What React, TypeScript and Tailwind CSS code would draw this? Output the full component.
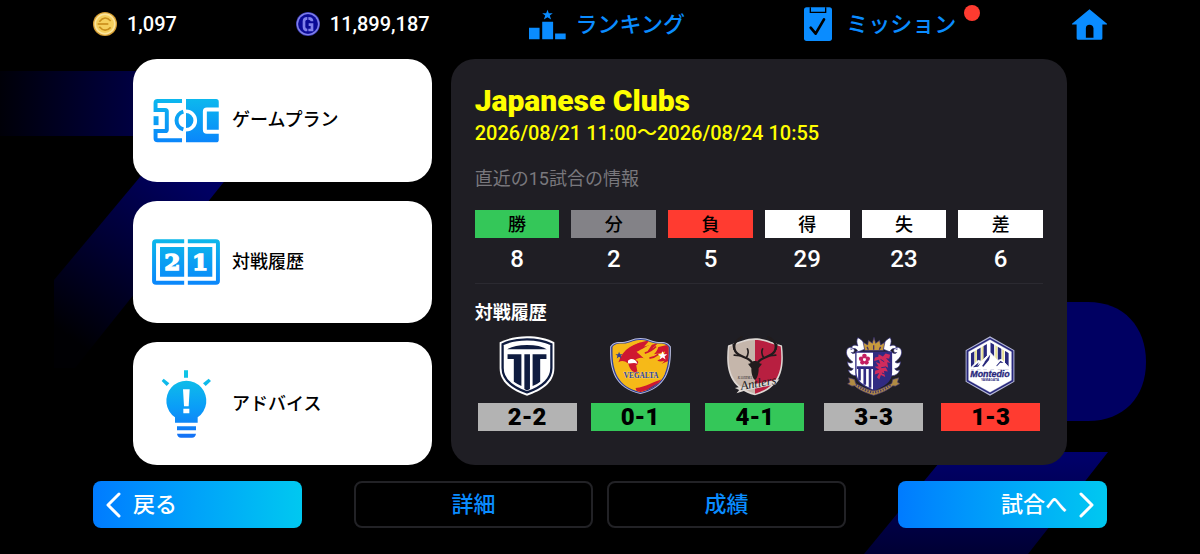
import React from "react";
import clsx from "clsx";

interface Stat {
  label: string;
  value: number;
  color: string;
}

interface Match {
  club: string;
  score: string;
  color: string;
  Crest: React.FC;
}

interface MenuItem {
  label: string;
  Icon: React.FC;
}

const CoinIcon = () => (
  <svg className="size-6 shrink-0" viewBox="0 0 72 72" aria-hidden="true">
    <circle cx="36" cy="36" r="36" fill="#d9a033" />
    <circle cx="36" cy="36" r="32" fill="#fbe49a" />
    <circle cx="36" cy="36" r="27" fill="#f5cf5c" />
    <g fill="none" stroke="#c98f1c" strokeWidth="5">
      <path d="M19 29 Q36 8 53 27" />
      <path d="M14 36 H46" />
      <path d="M19 44 Q36 64 53 46" />
    </g>
  </svg>
);

const GpIcon = () => (
  <svg className="size-6 shrink-0" viewBox="0 0 72 72" aria-hidden="true">
    <circle cx="36" cy="36" r="36" fill="#3a3ab0" />
    <circle cx="36" cy="36" r="32" fill="none" stroke="#8080ea" strokeWidth="4" />
    <circle cx="36" cy="36" r="29" fill="#0a0a96" />
    <g fill="none" stroke="#8080ea" strokeWidth="8">
      <path d="M34 19 Q24 19 24 28 V44 Q24 54 34 54" />
      <path d="M37 19 Q48 19 48 28" />
      <path d="M38 38 H48 V54 H37" />
    </g>
  </svg>
);

const RankingIcon = () => (
  <svg
    className="h-[31px] w-[37px] shrink-0"
    viewBox="57 24 112 92"
    fill="currentColor"
    aria-hidden="true"
  >
    <path d="M57 80h32v35H57zM97 62h33v53H97zM136 97h32v18h-32z" />
    <path d="M113 25l4 11h12l-9 7 4 12-11-7-11 7 4-12-9-7h12z" />
  </svg>
);

const MissionIcon = () => (
  <svg className="h-[34px] w-7 shrink-0" viewBox="75 21 84 102" aria-hidden="true">
    <rect x="75" y="22" width="84" height="101" rx="8" fill="currentColor" />
    <path d="M94 22v15h46V22" fill="none" stroke="#000" strokeWidth="4" />
    <path
      d="M95 83l15 18 25-43"
      fill="none"
      stroke="#000"
      strokeWidth="8"
      strokeLinecap="round"
      strokeLinejoin="round"
    />
  </svg>
);

const HomeIcon = () => (
  <svg
    className="h-[31px] w-[35px]"
    viewBox="874 26 106 92"
    fill="currentColor"
    aria-hidden="true"
  >
    <path d="M927 26l53 44v2h-14v42q0 4-4 4h-70q-4 0-4-4V72h-14v-2z" />
    <path d="M916 112V84q0-11 11-11t12 11v28z" fill="#000" />
  </svg>
);

const GamePlanIcon = () => (
  <svg className="h-[45px] w-[68px] shrink-0" viewBox="66 128 204 136" aria-hidden="true">
    <defs>
      <linearGradient
        id="plan"
        x1="0"
        y1="131"
        x2="0"
        y2="262"
        gradientUnits="userSpaceOnUse"
      >
        <stop stopColor="#0cb8ee" />
        <stop offset="1" stopColor="#0a86fb" />
      </linearGradient>
    </defs>
    <g fill="none" stroke="url(#plan)" strokeWidth="12">
      <path d="M156 137H82q-6 0-6 6v21h29q5 0 5 5v54q0 5-5 5H76v22q0 6 6 6h74" />
      <path d="M160 169a28 28 0 0 0 0 54" strokeWidth="12" />
    </g>
    <path d="M70 183h15v27H70z" fill="url(#plan)" />
    <path d="M168 131h91q8 0 8 8v115q0 8-8 8h-91z" fill="url(#plan)" />
    <path d="M168 168a28 28 0 0 1 0 56" fill="none" stroke="#fff" strokeWidth="11" />
    <path
      d="M270 163h-39q-6 0-6 6v55q0 6 6 6h39"
      fill="none"
      stroke="#fff"
      strokeWidth="12"
    />
  </svg>
);

const HistoryIcon = () => (
  <svg className="h-[46px] w-[68px] shrink-0" viewBox="66 551 205 139" aria-hidden="true">
    <defs>
      <linearGradient
        id="history"
        x1="0"
        y1="552"
        x2="0"
        y2="689"
        gradientUnits="userSpaceOnUse"
      >
        <stop stopColor="#0cb8ea" />
        <stop offset="1" stopColor="#0a86fb" />
      </linearGradient>
    </defs>
    <g fill="none" stroke="url(#history)" strokeWidth="12">
      <path d="M163 558H78q-6 0-6 6v113q0 6 6 6h85" />
      <path d="M174 558h85q6 0 6 6v113q0 6-6 6h-85" />
    </g>
    <path d="M90 575h73v90H90zM174 575h74v90h-74z" fill="url(#history)" />
    <g
      fill="#fff"
      stroke="#fff"
      strokeWidth="4"
      fontFamily="'DejaVu Serif', serif"
      fontWeight="700"
      fontSize="70"
      textAnchor="middle"
    >
      <text x="127" y="646">
        2
      </text>
      <text x="211" y="646">
        1
      </text>
    </g>
  </svg>
);

const AdviceIcon = () => (
  <svg className="h-[70px] w-[68px] shrink-0" viewBox="66 117 204 208" aria-hidden="true">
    <defs>
      <linearGradient
        id="advice"
        x1="0"
        y1="120"
        x2="0"
        y2="322"
        gradientUnits="userSpaceOnUse"
      >
        <stop stopColor="#10c8e4" />
        <stop offset="0.55" stopColor="#0a9df8" />
        <stop offset="1" stopColor="#1470f5" />
      </linearGradient>
    </defs>
    <g fill="url(#advice)">
      <path d="M162 120h12v22h-12zM101 145l17 14-8 8-15-15zM236 145l-17 14 8 8 16-15z" />
      <path d="M135 277v-16a60 60 0 1 1 68 0v16z" />
      <path d="M141 288h57v12h-57zM141 310h57q-2 12-12 12h-33q-10 0-12-12z" />
    </g>
    <path d="M159 177h20l-3 51h-14zM160 235h18v14h-18z" fill="#fff" />
  </svg>
);

const TochigiCrest = () => (
  <svg className="h-[60px] w-[56px]" viewBox="117 32 168 182" aria-hidden="true">
    <path
      d="M201 33c30 0 60 6 83 18v78c0 46-40 69-83 84-43-15-83-38-83-84V51c23-12 53-18 83-18z"
      fill="#fff"
    />
    <path
      d="M201 42c27 0 53 5 74 15v72c0 40-34 60-74 74-40-14-74-34-74-74V57c21-10 47-15 74-15z"
      fill="none"
      stroke="#0f1c40"
      strokeWidth="7"
    />
    <g fill="#0f1c40">
      <path d="M141 72q20-13 60-13t60 13z" />
      <path d="M142 87h42v97q-13-6-23-13v-69h-19z" />
      <path d="M193 87h17v106l-9 4-8-4z" />
      <path d="M218 87h42v15h-19v69q-9 8-23 13z" />
    </g>
  </svg>
);

const VegaltaCrest = () => (
  <svg className="h-[60px] w-[63px]" viewBox="449 32 188 182" aria-hidden="true">
    <defs>
      <clipPath id="vegaltaShield">
        <path d="M543 44c23 0 34 11 51 11 14 0 24-1 34 10 2 66-11 121-85 137-74-16-87-71-85-137 10-11 20-10 34-10 17 0 28-11 51-11z" />
      </clipPath>
    </defs>
    <path
      d="M543 38c24 0 38 12 54 12 16 0 28-1 38 14 3 73-14 127-92 144-78-17-95-71-92-144 10-15 22-14 38-14 16 0 30-12 54-12z"
      fill="#b9bde0"
    />
    <path
      d="M543 41c23 0 36 12 53 12 15 0 26-1 36 12 2 69-13 123-89 140-76-17-91-71-89-140 10-13 21-12 36-12 17 0 30-12 53-12z"
      fill="#2f3f97"
    />
    <g clipPath="url(#vegaltaShield)">
      <path d="M455 40h180v170H455z" fill="#f6b918" />
      <path
        d="M476 112c14-42 45-58 95-67l-17 19 42-10-17 16 50-12 3 48-49 20c-18-30-42-34-57-20 12-1 13 9 4 15l5 26c-14-2-26-14-29-32-12-8-20-10-30-3z"
        fill="#cf1830"
      />
      <path d="M505 107c10-10 24-4 29 9-11-5-19 0-29-1z" fill="#fff" />
      <path
        d="M531 80c15-6 35-20 49-25l-16 24q18-4 34-19-2 16-14 27 18-2 34-8-8 20-24 28 10 4 22 0-12 18-34 22-18-20-51-49z"
        fill="#f6b918"
      />
      <path
        d="M505 76q16-14 38-22M556 84q20-5 34-20M570 99q16-2 28-12"
        stroke="#cf1830"
        strokeWidth="5"
        fill="none"
      />
      <path d="M488 171c30 18 57 2 92-9l45-20-16 36-66 30z" fill="#f6b918" />
      <path d="M528 190c34-3 46-19 91-29l-25 34-60 13z" fill="#cf1830" />
      <path d="M562 200c14-10 23-19 52-27" stroke="#2f3f97" strokeWidth="7" fill="none" />
    </g>
    <path d="M478 80l3 7h8l-6 5 2 8-7-5-7 5 2-8-6-5h8z" fill="#2f3f97" />
    <path d="M610 78l4 9h10l-8 7 3 9-9-6-9 6 3-9-8-7h10z" fill="#fff" />
    <text
      x="545"
      y="160"
      textAnchor="middle"
      fontFamily="'Liberation Serif', serif"
      fontWeight="700"
      fontSize="22"
      fill="#2f3f97"
      stroke="#f6dc8a"
      strokeWidth="2"
      paintOrder="stroke"
    >
      VEGALTA
    </text>
  </svg>
);

const AntlersCrest = () => (
  <svg className="h-[60px] w-[58px]" viewBox="111 32 174 182" aria-hidden="true">
    <path
      d="M198 39c26 0 45 10 82 22 7 60 4 127-82 151-86-24-89-91-82-151 37-12 56-22 82-22z"
      fill="#ddd7d3"
    />
    <path d="M198 44c-26 0-45 10-78 20-6 58-1 120 78 143z" fill="#c5b6ab" />
    <path d="M198 44c26 0 45 10 78 20 6 58 1 120-78 143z" fill="#b81f40" />
    <g fill="none" stroke="#211c1d" strokeLinecap="round" strokeLinejoin="round">
      <path
        d="M190 116c-5-21-40-17-52-38-7-17-3-30 20-43M206 116c5-21 40-17 52-38 7-17 3-30-20-43"
        strokeWidth="7"
      />
      <path
        d="M134 72l-2-14M152 92l-17-2M171 99c8-11 7-23 4-28M262 72l2-14M244 92l17-2M225 99c-8-11-7-23-4-28"
        strokeWidth="5"
      />
    </g>
    <path
      d="M198 108c12 0 11 10 21 8-4 7-7 9-10 14 1 16-6 35-11 35s-12-19-11-35c-3-5-6-7-10-14 10 2 9-8 21-8z"
      fill="#211c1d"
    />
    <path d="M137 190l26-6 109-21-12 16-96 20-22 7 8-10z" fill="#ddd7d3" />
    <g fill="#211c1d" fontFamily="'Liberation Serif', serif" fontStyle="italic">
      <text x="146" y="163" fontSize="10">
        KASHIMA
      </text>
      <text x="156" y="196" fontSize="38" transform="rotate(-10 156 196)">
        Antlers
      </text>
    </g>
  </svg>
);

const CerezoCrest = () => (
  <svg className="h-[60px] w-[58px]" viewBox="467 33 174 182" aria-hidden="true">
    <g fill="#fff" stroke="#343084" strokeWidth="2">
      <path d="M505 38c15 6 23 21 21 35l-23 9v72c-15 0-23-7-27-18 7 3 13 1 15-4-12-2-17-11-17-21 5 5 12 5 16 1-13-10-22-21-19-34 2-12 17-14 22-5 4 6-1 12-8 10 4 6 14 3 19-6-7-9-14-7-20-2 0-14 11-17 21-12-3-9-5-17 0-25z" />
      <path d="M603 38c-15 6-23 21-21 35l23 9v72c15 0 23-7 27-18-7 3-13 1-15-4 12-2 17-11 17-21-5 5-12 5-16 1 13-10 22-21 19-34-2-12-17-14-22-5-4 6 1 12 8 10-4 6-14 3-19-6 7-9 14-7 20-2 0-14-11-17-21-12 3-9 5-17 0-25z" />
    </g>
    <path
      d="M526 77l-5-25 14 8 2-14 12 9 5-18 5 18 12-9 3 14 13-8-5 25z"
      fill="#c79a3d"
      stroke="#343084"
      strokeWidth="2"
    />
    <path
      d="M533 66l4 9M553 61v14M574 66l-4 9"
      stroke="#4a3265"
      strokeWidth="4"
    />
    <path d="M497 80h112v64c0 29-25 44-56 55-31-11-56-26-56-55z" fill="#312b82" />
    <path d="M501 84h50v111c-28-12-50-24-50-51z" fill="#fff" />
    <path
      d="M502 129h49M510 130v38M526 130v51M542 130v60"
      stroke="#312b82"
      strokeWidth="8"
    />
    <g fill="#c41f62">
      <circle cx="525" cy="94" r="7" />
      <circle cx="535" cy="102" r="7" />
      <circle cx="531" cy="113" r="7" />
      <circle cx="519" cy="113" r="7" />
      <circle cx="515" cy="102" r="7" />
      <circle cx="525" cy="105" r="4" fill="#fff" />
    </g>
    <path
      d="M568 88l13 7 8-9 14 4-3 12-10-2 14 15-10-2 3 16-9-4 8 16-12-2 4 18-13-6-5 14-7-7 7-13-14 5 2-12 12-3-14-9 12-1-9-13 14 5-4-12-15 4 3-11 10-2z"
      fill="#d02b5c"
    />
    <path
      d="M574 104l11 7M576 129l14-2M578 145l9 4"
      stroke="#312b82"
      strokeWidth="3"
    />
    <path
      d="M477 160l18 5 3 12c20 10 35 20 55 22 20-2 35-12 55-22l3-12 18-5-4 13 7 5-13 7-8-1c-15 14-37 22-58 29-21-7-43-15-58-29l-8 1-13-7 7-5z"
      fill="#b08b43"
      stroke="#56447a"
      strokeWidth="2"
    />
    <path
      d="M499 180q27 21 54 24 27-3 54-24"
      fill="none"
      stroke="#43356e"
      strokeWidth="6"
      strokeDasharray="4 4"
    />
  </svg>
);

const MontedioCrest = () => (
  <svg className="h-[60px] w-[50px]" viewBox="199 32 150 182" aria-hidden="true">
    <defs>
      <clipPath id="montedioSky">
        <path d="M274 51l59 34v51H215V85z" />
      </clipPath>
    </defs>
    <path d="M274 33l74 42v96l-74 42-74-42V75z" fill="#b5b8d6" />
    <path d="M274 37l71 40v92l-71 40-71-40V77z" fill="#28287c" />
    <path
      d="M274 43l65 37v86l-65 37-65-37V80z"
      fill="#fff"
      stroke="#d8daea"
      strokeWidth="1"
    />
    <g clipPath="url(#montedioSky)">
      <path
        d="M221 55v81M240 55v81M259 45v91M281 45v91M303 55v81M325 55v81"
        stroke="#28287c"
        strokeWidth="11"
      />
      <path
        d="M231 65v50M251 50v60M293 50v60M314 65v45"
        stroke="#e7df92"
        strokeWidth="6"
      />
    </g>
    <path
      d="M211 133l27-27 10 3 27-26 22 23 12-3 28 30z"
      fill="#fff"
      stroke="#fff"
      strokeWidth="3"
    />
    <path
      d="M222 127l18-15-5 11 10-8-7 10zM255 113l20-25-4 17-17 20-4-2 9-14zM293 122l13-15 9 7-10-1-10 11z"
      fill="#28287c"
    />
    <g textAnchor="middle" fill="#28287c" fontWeight="700">
      <text
        x="274"
        y="156"
        fontFamily="'Liberation Sans', sans-serif"
        fontStyle="italic"
        fontSize="27"
        stroke="#28287c"
        strokeWidth="1"
      >
        Montedio
      </text>
      <text x="274" y="168" fontFamily="'Liberation Sans', sans-serif" fontSize="10">
        YAMAGATA
      </text>
    </g>
  </svg>
);

const Backdrop = () => (
  <svg
    className="absolute inset-0 h-full w-full"
    viewBox="0 0 1200 554"
    preserveAspectRatio="xMidYMid slice"
    aria-hidden="true"
  >
    <defs>
      <linearGradient id="bar">
        <stop stopColor="#000008" />
        <stop offset="1" stopColor="#000048" />
      </linearGradient>
      <linearGradient
        id="slashLeft"
        x1="200"
        y1="185"
        x2="80"
        y2="345"
        gradientUnits="userSpaceOnUse"
      >
        <stop stopColor="#000062" />
        <stop offset="0.5" stopColor="#000034" />
        <stop offset="1" stopColor="#000003" />
      </linearGradient>
      <linearGradient id="slashRight" x2="0" y2="1">
        <stop stopColor="#00006c" />
        <stop offset="1" stopColor="#000034" />
      </linearGradient>
    </defs>
    <path d="M0 71h150v65H0z" fill="url(#bar)" />
    <path d="M160 153h87L75 368H54v-88z" fill="url(#slashLeft)" />
    <path
      d="M1000 302h88c36 0 58 25 58 60s-22 59-58 59h-88z"
      fill="#000062"
    />
    <path d="M948 452h160l-80 102H864z" fill="url(#slashRight)" />
  </svg>
);

const menu: MenuItem[] = [
  { label: "ゲームプラン", Icon: GamePlanIcon },
  { label: "対戦履歴", Icon: HistoryIcon },
  { label: "アドバイス", Icon: AdviceIcon },
];

const stats: Stat[] = [
  { label: "勝", value: 8, color: "bg-[#34c759]" },
  { label: "分", value: 2, color: "bg-[#838287]" },
  { label: "負", value: 5, color: "bg-[#ff3b30]" },
  { label: "得", value: 29, color: "bg-white" },
  { label: "失", value: 23, color: "bg-white" },
  { label: "差", value: 6, color: "bg-white" },
];

const matches: Match[] = [
  { club: "tochigi", score: "2-2", color: "bg-[#b3b3b3]", Crest: TochigiCrest },
  { club: "vegalta", score: "0-1", color: "bg-[#34c759]", Crest: VegaltaCrest },
  { club: "antlers", score: "4-1", color: "bg-[#34c759]", Crest: AntlersCrest },
  { club: "cerezo", score: "3-3", color: "bg-[#b3b3b3]", Crest: CerezoCrest },
  { club: "montedio", score: "1-3", color: "bg-[#ff3b30]", Crest: MontedioCrest },
];

const Header = () => (
  <header className="grid h-12 grid-cols-[203fr_233fr_276fr_268fr_35px] items-center px-[93px] text-[#0a8cff]">
    <div className="flex items-center gap-2.5 text-xl font-medium text-white">
      <CoinIcon />
      1,097
    </div>
    <div className="flex items-center gap-2.5 text-xl font-medium text-white">
      <GpIcon />
      11,899,187
    </div>
    <a href="#ranking" className="flex items-center gap-2.5 text-[22px] font-medium">
      <RankingIcon />
      ランキング
    </a>
    <a
      href="#mission"
      className="relative flex items-center gap-3.5 justify-self-start text-[22px] font-medium"
    >
      <MissionIcon />
      ミッション
      <span className="absolute -top-0.5 -right-6 size-4 rounded-full bg-[#ff3b30]" />
    </a>
    <a href="#home" aria-label="ホーム">
      <HomeIcon />
    </a>
  </header>
);

const Menu = () => (
  <nav className="grid auto-rows-fr gap-[19px]">
    {menu.map(({ label, Icon }) => (
      <button
        key={label}
        type="button"
        className="flex items-center gap-3 rounded-3xl bg-white px-[19px] text-lg font-medium text-black"
      >
        <Icon />
        {label}
      </button>
    ))}
  </nav>
);

const StatsTable = () => (
  <div className="-mx-3 mt-[17px]">
    <table className="w-full table-fixed border-separate border-spacing-x-3 border-spacing-y-0 text-center">
      <thead>
        <tr>
          {stats.map(({ label, color }) => (
            <th
              key={label}
              scope="col"
              className={clsx(
                "h-7 p-0 pt-0.5 text-lg leading-[26px] font-medium text-black",
                color
              )}
            >
              {label}
            </th>
          ))}
        </tr>
      </thead>
      <tbody>
        <tr>
          {stats.map(({ label, value }) => (
            <td key={label} className="h-[45px] p-0 pb-1 text-2xl font-medium text-white">
              {value}
            </td>
          ))}
        </tr>
      </tbody>
    </table>
  </div>
);

const Matches = () => (
  <ul className="mt-[9px] grid grid-cols-[113fr_115fr_119fr_117fr_99px] px-[3px]">
    {matches.map(({ club, score, color, Crest }) => (
      <li key={club} className="flex w-[99px] flex-col items-center gap-[7px]">
        <Crest />
        <span
          className={clsx(
            "w-full text-center text-2xl leading-7 font-black text-black",
            color
          )}
        >
          {score}
        </span>
      </li>
    ))}
  </ul>
);

const EventPanel = () => (
  <section className="rounded-3xl bg-[#1f1e24] px-6 pt-7 pb-[34px]">
    <h1 className="text-[30px] leading-7 font-black text-[#ffff00]">Japanese Clubs</h1>
    <p className="mt-1 text-xl leading-7 font-medium text-[#ffff00]">
      2026/08/21 11:00〜2026/08/24 10:55
    </p>
    <p className="mt-[18px] text-lg leading-7 text-[#79787d]">直近の15試合の情報</p>
    <StatsTable />
    <hr className="border-[#2b2a31]" />
    <h2 className="mt-[15px] text-lg leading-7 font-bold text-white">対戦履歴</h2>
    <Matches />
  </section>
);

const Chevron: React.FC<{ d: string }> = ({ d }) => (
  <svg
    className="h-7 w-4 shrink-0"
    viewBox="0 0 16 28"
    fill="none"
    stroke="currentColor"
    strokeWidth="3"
    strokeLinecap="round"
    strokeLinejoin="round"
    aria-hidden="true"
  >
    <path d={d} />
  </svg>
);

const Footer = () => (
  <footer className="mt-4 grid h-[47px] grid-cols-[209fr_492fr_209fr] gap-[52px] px-[93px] text-[22px] font-medium">
    <button
      type="button"
      className="flex items-center gap-3 rounded-lg bg-linear-to-r from-[#007bff] to-[#00c8f0] px-3 text-white"
    >
      <Chevron d="M14 3L3 14l11 11" />
      戻る
    </button>
    <div className="grid grid-cols-2 gap-3.5 text-[#0a8cff]">
      <button type="button" className="rounded-lg border-2 border-[#222226] bg-black">
        詳細
      </button>
      <button type="button" className="rounded-lg border-2 border-[#222226] bg-black">
        成績
      </button>
    </div>
    <button
      type="button"
      className="flex items-center justify-end gap-3 rounded-lg bg-linear-to-r from-[#007bff] to-[#00c8f0] px-3 text-white"
    >
      試合へ
      <Chevron d="M2 3l11 11L2 25" />
    </button>
  </footer>
);

const App: React.FC = () => {
  return (
    <div
      lang="ja"
      className="relative min-h-screen overflow-hidden bg-black pb-[26px] font-[Roboto,'Noto_Sans_CJK_JP',sans-serif]"
    >
      <Backdrop />
      <div className="relative">
        <Header />
        <main className="mt-[11px] grid grid-cols-[299fr_617fr] gap-[19px] px-[133px]">
          <Menu />
          <EventPanel />
        </main>
        <Footer />
      </div>
    </div>
  );
};

export default App;
